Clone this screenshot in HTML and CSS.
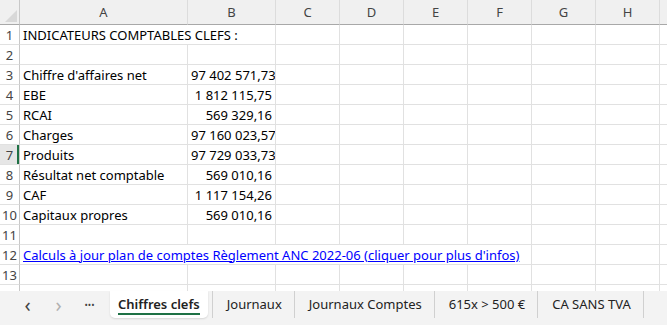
FILE: index.html
```html
<!DOCTYPE html>
<html lang="fr">
<head>
    <meta charset="UTF-8">
    <title>Chiffres clefs</title>
    <link rel="stylesheet" href="styles.css">
</head>
<body>
    <div class="sheet">
        <table class="grid">
            <colgroup>
                <col class="col-head">
                <col class="col-a">
                <col class="col-b">
                <col class="col-n"><col class="col-n"><col class="col-n">
                <col class="col-n"><col class="col-n"><col class="col-n">
                <col class="col-rest">
            </colgroup>
            <tr class="letters">
                <th class="corner"><span class="tri"></span></th>
                <th>A</th><th>B</th><th>C</th><th>D</th><th>E</th><th>F</th><th>G</th><th>H</th><th></th>
            </tr>
            <tr><th>1</th><td colspan="2">INDICATEURS COMPTABLES CLEFS :</td><td></td><td></td><td></td><td></td><td></td><td></td><td></td></tr>
            <tr><th>2</th><td></td><td></td><td></td><td></td><td></td><td></td><td></td><td></td><td></td></tr>
            <tr><th>3</th><td>Chiffre d'affaires net</td><td class="num">97 402 571,73</td><td></td><td></td><td></td><td></td><td></td><td></td><td></td></tr>
            <tr><th>4</th><td>EBE</td><td class="num">1 812 115,75</td><td></td><td></td><td></td><td></td><td></td><td></td><td></td></tr>
            <tr><th>5</th><td>RCAI</td><td class="num">569 329,16</td><td></td><td></td><td></td><td></td><td></td><td></td><td></td></tr>
            <tr><th>6</th><td>Charges</td><td class="num">97 160 023,57</td><td></td><td></td><td></td><td></td><td></td><td></td><td></td></tr>
            <tr class="active"><th>7</th><td>Produits</td><td class="num">97 729 033,73</td><td></td><td></td><td></td><td></td><td></td><td></td><td></td></tr>
            <tr><th>8</th><td>Résultat net comptable</td><td class="num">569 010,16</td><td></td><td></td><td></td><td></td><td></td><td></td><td></td></tr>
            <tr><th>9</th><td>CAF</td><td class="num">1 117 154,26</td><td></td><td></td><td></td><td></td><td></td><td></td><td></td></tr>
            <tr><th>10</th><td>Capitaux propres</td><td class="num">569 010,16</td><td></td><td></td><td></td><td></td><td></td><td></td><td></td></tr>
            <tr><th>11</th><td></td><td></td><td></td><td></td><td></td><td></td><td></td><td></td><td></td></tr>
            <tr><th>12</th><td colspan="6"><a href="#">Calculs à jour plan de comptes Règlement ANC 2022-06 (cliquer pour plus d'infos)</a></td><td></td><td></td><td></td></tr>
            <tr><th>13</th><td></td><td></td><td></td><td></td><td></td><td></td><td></td><td></td><td></td></tr>
            <tr><th></th><td></td><td></td><td></td><td></td><td></td><td></td><td></td><td></td><td></td></tr>
        </table>
    </div>

    <div class="tabbar">
        <span class="nav">&#x2039;</span>
        <span class="nav off">&#x203A;</span>
        <span class="nav dots">&bull;&bull;&bull;</span>
        <span class="tab current">Chiffres clefs</span>
        <span class="tab">Journaux</span>
        <span class="tab">Journaux Comptes</span>
        <span class="tab">615x &gt; 500 €</span>
        <span class="tab last">CA SANS TVA</span>
    </div>
</body>
</html>
```

FILE: styles.css
```css
body {
    margin: 0;
    width: 667px;
    height: 325px;
    overflow: hidden;
    background: #fff;
    font-family: "Noto Sans", "Open Sans", sans-serif;
    color: #000;
}

.sheet {
    height: 291px;
    overflow: hidden;
}

.grid {
    border-collapse: separate;
    border-spacing: 0;
    table-layout: fixed;
    width: 690px;
    font-size: 13px;
}
.col-head { width: 20px; }
.col-a { width: 168px; }
.col-b { width: 88px; }
.col-n { width: 64px; }
.col-rest { width: 30px; }

.grid td,
.grid th {
    box-sizing: border-box;
    height: 20px;
    padding: 0 3px;
    border-right: 1px solid #e1e1e1;
    border-bottom: 1px solid #e1e1e1;
    white-space: nowrap;
    overflow: hidden;
    line-height: 18px;
}

.grid th {
    background: #fff;
    color: #444;
    font-weight: normal;
    text-align: center;
    padding: 0;
    font-size: 13px;
}
.grid tr th:first-child {
    border-right: 1px solid #c8c8c8;
}

.letters th {
    height: 25px;
    background: #f0f0f0;
    border-bottom: 1px solid #a8a8a8;
    border-right: 1px solid #dcdcdc;
    font-size: 13px;
}
.corner {
    position: relative;
}
.tri {
    position: absolute;
    right: 2px;
    bottom: 2px;
    width: 0;
    height: 0;
    border-left: 12px solid transparent;
    border-bottom: 12px solid #d8d8d8;
}

.active th {
    background: #e6e6e6;
    box-shadow: inset -2px 0 0 #1e7145;
}

.num {
    text-align: right;
}

.grid a {
    color: #0000ff;
    text-decoration: underline;
}

.tabbar {
    height: 34px;
    background: #f3f3f3;
    display: flex;
    align-items: flex-start;
    font-size: 13px;
    color: #222;
    white-space: nowrap;
}
.nav {
    flex-shrink: 0;
    width: 31px;
    height: 27px;
    display: flex;
    align-items: center;
    justify-content: center;
    font-size: 20px;
    color: #444;
}
.nav:first-child { margin-left: 12px; }
.nav.off { color: #b0b0b0; }
.nav.dots {
    font-size: 9px;
}
.tab {
    flex-shrink: 0;
    height: 27px;
    display: flex;
    align-items: center;
    padding: 0 12px 0 14px;
    border-left: 1px solid #d0d0d0;
    line-height: 1;
}
.tab.last {
    border-right: 1px solid #d0d0d0;
}
.tab.current {
    margin-left: 5px;
    background: #fff;
    border-left: none;
    border-radius: 0 0 5px 5px;
    box-shadow: 0 1px 2px rgba(0, 0, 0, 0.12);
    font-weight: 600;
    position: relative;
    padding: 0 8px;
    margin-right: 4px;
}
.tab.current::after {
    content: "";
    position: absolute;
    left: 8px;
    right: 8px;
    bottom: 3px;
    height: 2px;
    background: #1e7145;
}
```
